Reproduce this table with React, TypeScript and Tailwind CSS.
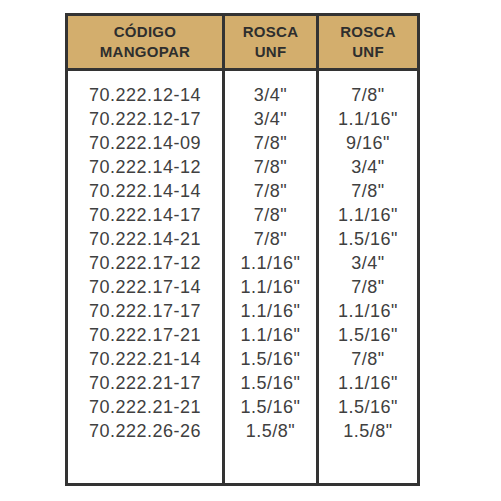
const rows: [string, string, string][] = [
  ['70.222.12-14', '3/4"', '7/8"'],
  ['70.222.12-17', '3/4"', '1.1/16"'],
  ['70.222.14-09', '7/8"', '9/16"'],
  ['70.222.14-12', '7/8"', '3/4"'],
  ['70.222.14-14', '7/8"', '7/8"'],
  ['70.222.14-17', '7/8"', '1.1/16"'],
  ['70.222.14-21', '7/8"', '1.5/16"'],
  ['70.222.17-12', '1.1/16"', '3/4"'],
  ['70.222.17-14', '1.1/16"', '7/8"'],
  ['70.222.17-17', '1.1/16"', '1.1/16"'],
  ['70.222.17-21', '1.1/16"', '1.5/16"'],
  ['70.222.21-14', '1.5/16"', '7/8"'],
  ['70.222.21-17', '1.5/16"', '1.1/16"'],
  ['70.222.21-21', '1.5/16"', '1.5/16"'],
  ['70.222.26-26', '1.5/8"', '1.5/8"'],
]

const Column = ({ title, values, className }: { title: string[]; values: string[]; className: string }) => (
  <div className={`flex flex-col ${className}`}>
    <div className="h-[55px] bg-[#d3ae6d] border-b-[3px] border-[#333] flex flex-col items-center justify-center text-[15px] leading-[20px] font-bold tracking-[0.3px] text-[#2e2e2e]">
      {title.map((t) => (
        <div key={t}>{t}</div>
      ))}
    </div>
    <div className="flex-1 pt-[12px] flex flex-col items-center text-[18px] leading-[24px] tracking-[0.5px] text-[#404040]">
      {values.map((v, i) => (
        <div key={i}>{v}</div>
      ))}
    </div>
  </div>
)

export default function App() {
  return (
    <div className="w-[501px] h-[501px] bg-white pt-[13px] pl-[65px]" style={{ fontFamily: '"Liberation Sans", Arial, sans-serif' }}>
      <div className="w-[355px] h-[473px] border-[3px] border-[#333] flex">
        <Column title={['CÓDIGO', 'MANGOPAR']} values={rows.map((r) => r[0])} className="w-[154px]" />
        <Column title={['ROSCA', 'UNF']} values={rows.map((r) => r[1])} className="w-[94px] border-l-[3px] border-[#333]" />
        <Column title={['ROSCA', 'UNF']} values={rows.map((r) => r[2])} className="flex-1 border-l-[3px] border-[#333]" />
      </div>
    </div>
  )
}
